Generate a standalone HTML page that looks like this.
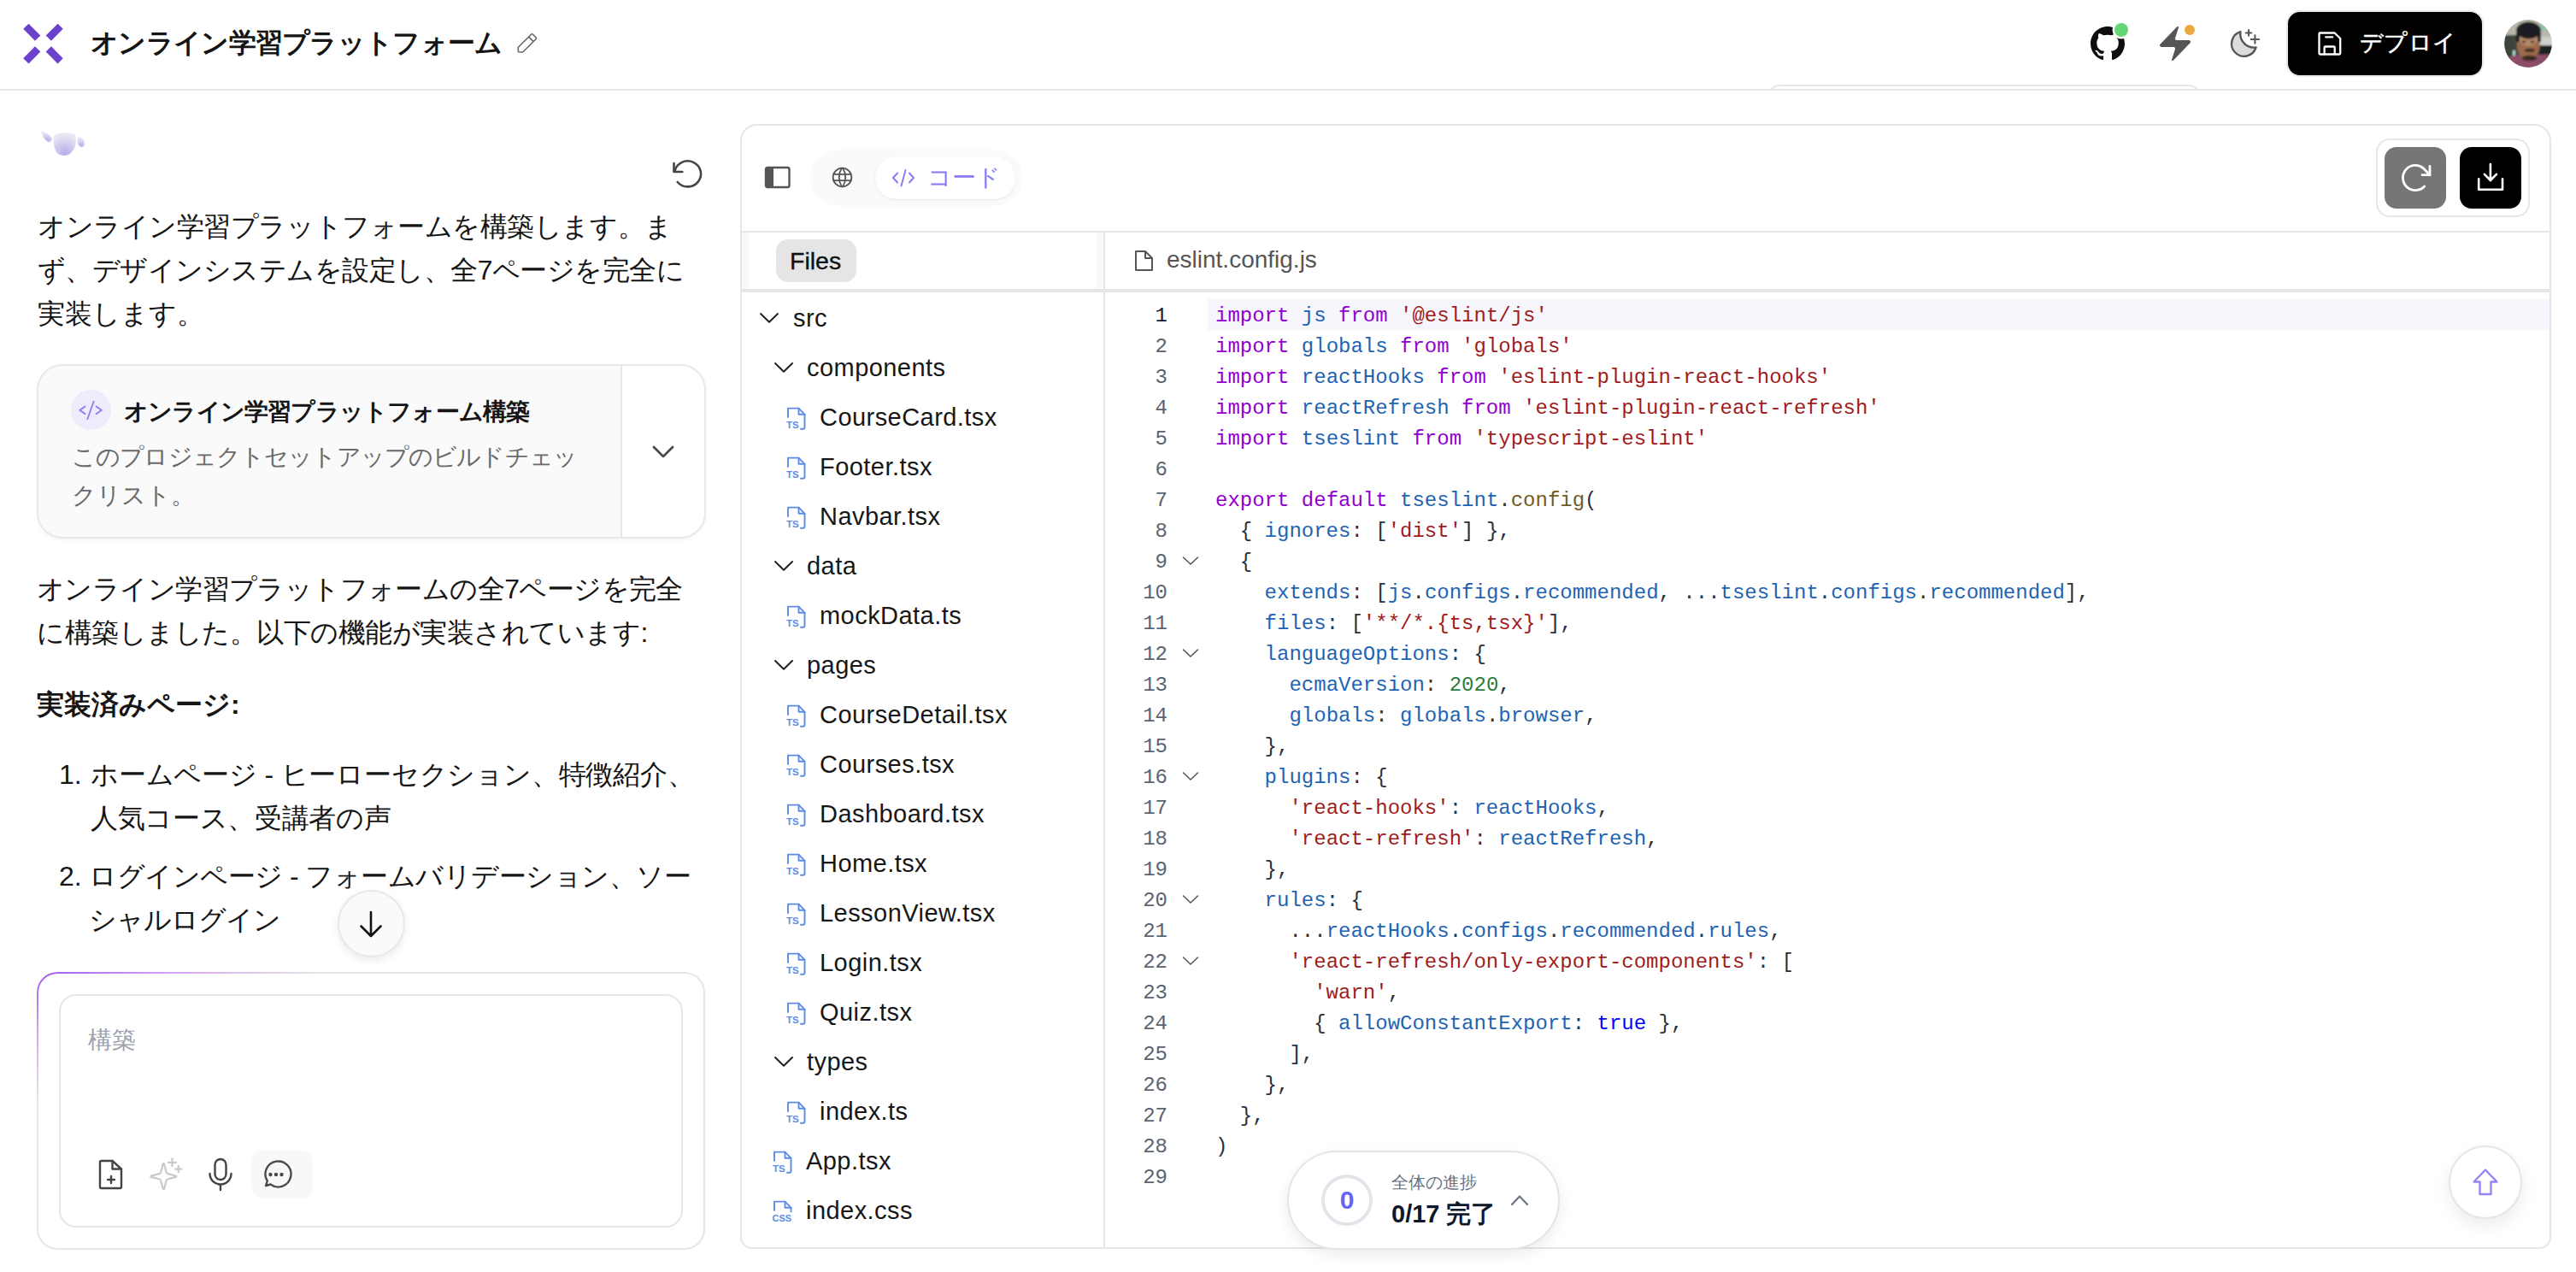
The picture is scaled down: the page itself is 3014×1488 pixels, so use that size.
<!DOCTYPE html>
<html><head><meta charset="utf-8">
<style>
*{box-sizing:border-box;margin:0;padding:0}
html,body{width:3014px;height:1488px;overflow:hidden;background:#fff;font-family:"Liberation Sans",sans-serif;color:#111}
.a{position:absolute}
svg{display:block}
/* header */
#hdr{left:0;top:0;width:3014px;height:106px;border-bottom:2px solid #e6e6e6;background:#fff}
#title{left:106px;top:26px;font-size:32px;font-weight:700;line-height:48px;color:#151515;white-space:nowrap;letter-spacing:-0.7px}
#deploy{left:2674.5px;top:12px;width:231px;height:78px;border-radius:16px;background:#000;border:2px solid #e9e9e9}
#deploytxt{left:2761px;top:30px;font-size:27px;line-height:40px;color:#fff;white-space:nowrap;letter-spacing:0.3px;-webkit-text-stroke:0.5px #fff}
#avatar{left:2930px;top:23px;width:56px;height:56px;border-radius:50%;overflow:hidden;background:#6f7468}
/* chat */
.jp{font-size:32px;line-height:51.2px;color:#151515;white-space:nowrap}
#card{left:43px;top:426px;width:782.5px;height:204px;border-radius:30px;background:#fafafa;border:2px solid #e8e8e8;box-shadow:0 2px 4px rgba(0,0,0,0.04)}
#outer{left:43px;top:1137px;width:782px;height:325px;border-radius:24px;border:2px solid #e6e6e6}
#inner{left:69px;top:1163px;width:730px;height:273px;border-radius:20px;border:2px solid #e6e6e6}
/* panel */
#panel{left:866px;top:145px;width:2119px;height:1316px;border-radius:20px 20px 14px 14px;border:2px solid #e6e6e6;background:#fff}
.row{position:absolute;font-size:29px;line-height:40px;color:#171717;white-space:nowrap;letter-spacing:0.45px}
.code{position:absolute;left:1422px;font-family:"Liberation Mono",monospace;font-size:24px;line-height:36px;white-space:pre;color:#2d3039}
.ln{position:absolute;left:1310px;width:56px;text-align:right;font-family:"Liberation Mono",monospace;font-size:24px;line-height:36px;color:#5c6370}
.k{color:#9000d0}.v{color:#2163b3}.s{color:#a01c1c}.f{color:#715b20}.n{color:#2a7d3e}.t{color:#0000ff}
</style></head><body>

<!-- tab behind header -->


<div id="hdr" class="a"></div>
<div class="a" style="left:2055px;top:97px;width:540px;height:7px;overflow:hidden"><div class="a" style="left:13px;top:1.5px;width:507px;height:40px;border:2px solid #e6e6e6;border-radius:14px;background:#fff"></div></div>
<svg class="a" style="left:0;top:0" width="90" height="90" viewBox="0 0 90 90">
<g fill="#6b42cc">
<polygon points="27.2,33.8 33.5,27.7 47.3,41.5 41,47.8"/>
<polygon points="53.7,41.5 67.5,27.7 73.7,33.8 59.9,47.8"/>
<polygon points="27.2,68.3 41,54.2 47.3,60.4 33.5,74.4"/>
<polygon points="53.7,60.4 59.9,54.2 73.7,68.3 67.5,74.4"/>
</g></svg>
<div id="title" class="a">オンライン学習プラットフォーム</div>
<svg class="a" style="left:600px;top:35px" width="32" height="32" viewBox="0 0 32 32" fill="none" stroke="#666" stroke-width="1.6" stroke-linejoin="round">
<path d="M6.5 25.8 L6.2 20.5 L21.5 5.2 a1.4 1.4 0 0 1 2 0 L27 8.7 a1.4 1.4 0 0 1 0 2 L11.7 26 Z"/><path d="M18.6 8.1 L24.1 13.6"/></svg>

<!-- header right icons -->
<svg class="a" style="left:2446px;top:31px" width="40" height="40" viewBox="0 0 16 16"><path fill="#0d0d0d" d="M8 0C3.58 0 0 3.58 0 8c0 3.54 2.29 6.53 5.47 7.59.4.07.55-.17.55-.38 0-.19-.01-.82-.01-1.49-2.010.37-2.53-.49-2.69-.94-.09-.23-.48-.94-.82-1.13-.28-.15-.68-.52-.01-.53.63-.01 1.08.58 1.23.82.72 1.21 1.87.87 2.33.66.07-.52.28-.87.51-1.07-1.78-.2-3.64-.89-3.64-3.95 0-.87.31-1.590.82-2.15-.08-.2-.36-1.02.08-2.12 0 0 .67-.21 2.2.82.64-.18 1.32-.27 2-.27.68 0 1.36.09 2 .27 1.53-1.04 2.2-.82 2.2-.82.44 1.1.16 1.92.08 2.12.51.56.82 1.27.82 2.15 0 3.07-1.87 3.75-3.65 3.95.29.25.54.73.54 1.48 0 1.07-.01 1.93-.01 2.2 0 .21.15.46.55.38A8.013 8.013 0 0016 8c0-4.42-3.58-8-8-8z"/></svg>
<div class="a" style="left:2474px;top:27px;width:16px;height:16px;border-radius:50%;background:#64d674;box-shadow:0 0 0 2.5px #fff"></div>
<svg class="a" style="left:2521px;top:27px" width="52" height="52" viewBox="0 0 26 26"><path fill="#555" d="M4 14a1 1 0 0 1-.78-1.63l9.9-10.2a.5.5 0 0 1 .86.46l-1.920 6.02A1 1 0 0 0 13 10h7a1 1 0 0 1 .78 1.63l-9.9 10.2a.5.5 0 0 1-.86-.46l1.92-6.02A1 1 0 0 0 11 14z"/></svg>
<div class="a" style="left:2556px;top:29px;width:12px;height:12px;border-radius:50%;background:#eba83d;box-shadow:0 0 0 2px #fff"></div>
<svg class="a" style="left:2600px;top:25px" width="50" height="48" viewBox="0 0 50 48" fill="none" stroke="#555" stroke-width="2.4" stroke-linecap="round" stroke-linejoin="round">
<path fill="#dcdcdc" d="M21.4 12.2 A16 16 0 0 0 39.6 30.4 A14.6 14.6 0 1 1 21.4 12.2 Z"/>
<path d="M31 10.1 V16.7 M27.7 13.4 H34.3 M38.4 16.3 V25.7 M33.7 21 H43.1" stroke-width="2"/></svg>

<div id="deploy" class="a"></div>
<svg class="a" style="left:2710px;top:35px" width="32" height="32" viewBox="0 0 32 32" fill="none" stroke="#fff" stroke-width="2.3" stroke-linejoin="round" stroke-linecap="round">
<path d="M4.5 3.5 H21.5 L28.2 10 V27.5 Q28.2 28.5 27.2 28.5 H4.5 Q3.5 28.5 3.5 27.5 V4.5 Q3.5 3.5 4.5 3.5 Z"/><path d="M9.6 28.5 V20.5 Q9.6 19.5 10.6 19.5 H20.7 Q21.7 19.5 21.7 20.5 V28.5"/><path d="M11.2 8.3 H19.2"/></svg>
<div id="deploytxt" class="a">デプロイ</div>
<svg class="a" style="left:2930px;top:23px" width="56" height="56" viewBox="0 0 56 56">
<defs><clipPath id="avc"><circle cx="28" cy="28" r="27.9"/></clipPath><filter id="avb"><feGaussianBlur stdDeviation="0.9"/></filter></defs>
<g clip-path="url(#avc)"><g filter="url(#avb)">
<rect x="-2" y="-2" width="60" height="60" fill="#b9b6aa"/>
<rect x="-2" y="18" width="22" height="30" fill="#3c443b"/>
<rect x="36" y="20" width="22" height="10" fill="#cfd0cb"/>
<rect x="38" y="30" width="20" height="16" fill="#1f2424"/>
<rect x="40" y="6" width="16" height="6" fill="#8fc4ae"/>
<rect x="10" y="36" width="3" height="10" fill="#a9d7d2"/>
<path d="M-2 46 C8 42 16 41 28 41 C40 41 48 41 58 40 V58 H-2 Z" fill="#8c4e68"/>
<ellipse cx="28.3" cy="29.5" rx="13.5" ry="18" fill="#9c6b4b"/>
<ellipse cx="28.3" cy="22" rx="11" ry="9" fill="#b88a6a"/>
<ellipse cx="28.5" cy="12.5" rx="14.3" ry="10" fill="#1d1b20"/>
<rect x="14" y="10" width="4" height="16" fill="#1d1b20"/><rect x="39" y="10" width="4" height="16" fill="#1d1b20"/>
<ellipse cx="30" cy="35.8" rx="6.5" ry="2" fill="#3a2a22"/>
<ellipse cx="29.5" cy="45" rx="9" ry="3.2" fill="#3b2a24"/>
<ellipse cx="23" cy="26" rx="2.5" ry="1.2" fill="#2a1d18"/><ellipse cx="33" cy="26" rx="2.5" ry="1.2" fill="#2a1d18"/>
</g></g></svg>

<!-- chat panel -->
<svg class="a" style="left:44px;top:150px" width="60" height="36" viewBox="0 0 60 36">
<defs><radialGradient id="bg1" cx="0.5" cy="0.9" r="0.8"><stop offset="0" stop-color="#b6aee8"/><stop offset="1" stop-color="#e8e6f3"/></radialGradient>
<filter id="bl"><feGaussianBlur stdDeviation="0.5"/></filter></defs>
<g filter="url(#bl)">
<path d="M4 4 C8 3 14 8 17 12 C16 16 14 17 12 16 C8 13 5 9 4 4Z" fill="url(#bg1)"/>
<path d="M19 10 C20 5 40 4 44 8 C46 14 45 24 38 30 C33 33 26 33 22 28 C19 23 18 15 19 10Z" fill="url(#bg1)"/>
<path d="M47 11 C50 9 55 13 55 18 C55 22 52 24 48 20 C46 17 46 13 47 11Z" fill="url(#bg1)"/>
</g></svg>
<svg class="a" style="left:780px;top:180px" width="48" height="48" viewBox="0 0 48 48" fill="none" stroke="#444" stroke-width="2.6" stroke-linecap="round" stroke-linejoin="round">
<path d="M9.5 20 A15.5 15 0 1 1 12.7 33"/><path d="M8.5 11 V21 H18.3"/></svg>

<div class="a jp" style="left:44px;top:240px;letter-spacing:-0.45px">オンライン学習プラットフォームを構築します。ま</div>
<div class="a jp" style="left:44px;top:291.2px;letter-spacing:-0.52px">ず、デザインシステムを設定し、全7ページを完全に</div>
<div class="a jp" style="left:44px;top:342.4px">実装します。</div>

<div id="card" class="a"></div>
<div class="a" style="left:728px;top:428px;width:95.5px;height:200px;background:#fff;border-radius:0 28px 28px 0"></div>
<div class="a" style="left:726px;top:428px;width:2px;height:200px;background:#e6e6e6"></div>
<div class="a" style="left:83px;top:456px;width:47px;height:47px;border-radius:50%;background:#efebfc"></div>
<svg class="a" style="left:90px;top:466px" width="32" height="28" viewBox="0 0 32 28" fill="none" stroke="#8b7cf0" stroke-width="1.8" stroke-linecap="round" stroke-linejoin="round">
<path d="M9.6 9.5 L3.4 13.8 L9.6 18.3 M22.5 9.5 L28.8 13.8 L22.5 18.3 M19.7 3.5 L12.3 24.2"/></svg>
<div class="a" style="left:145px;top:461.5px;font-size:28px;line-height:40px;font-weight:700;color:#151515;white-space:nowrap;letter-spacing:-0.8px">オンライン学習プラットフォーム構築</div>
<div class="a" style="left:84px;top:512px;font-size:28px;line-height:45px;color:#6a6a6a;white-space:nowrap;letter-spacing:-0.86px">このプロジェクトセットアップのビルドチェッ</div>
<div class="a" style="left:84px;top:557px;font-size:28px;line-height:45px;color:#6a6a6a;white-space:nowrap">クリスト。</div>
<svg class="a" style="left:760px;top:515px" width="32" height="30" viewBox="0 0 32 30" fill="none" stroke="#4a4a4a" stroke-width="2.8" stroke-linecap="round" stroke-linejoin="round">
<path d="M5 8 L16 19 L27 8"/></svg>

<div class="a jp" style="left:43px;top:664px;letter-spacing:-0.58px">オンライン学習プラットフォームの全7ページを完全</div>
<div class="a jp" style="left:43px;top:715.2px;letter-spacing:-0.48px">に構築しました。以下の機能が実装されています:</div>
<div class="a jp" style="left:43px;top:799px;font-weight:700">実装済みページ:</div>
<div class="a jp" style="left:69px;top:881px">1.</div>
<div class="a jp" style="left:106px;top:881px;letter-spacing:-0.2px">ホームページ - ヒーローセクション、特徴紹介、</div>
<div class="a jp" style="left:106px;top:932.2px;letter-spacing:-0.35px">人気コース、受講者の声</div>
<div class="a jp" style="left:69px;top:999.5px">2.</div>
<div class="a jp" style="left:104px;top:999.5px;letter-spacing:-0.5px">ログインページ - フォームバリデーション、ソー</div>
<div class="a jp" style="left:104px;top:1050.7px;letter-spacing:-1px">シャルログイン</div>

<div class="a" style="left:394.5px;top:1041px;width:79px;height:78.5px;border-radius:50%;background:#fafafa;border:2px solid #e8e8e8;box-shadow:0 4px 10px rgba(0,0,0,0.08)"></div>
<svg class="a" style="left:414px;top:1061px" width="40" height="40" viewBox="0 0 40 40" fill="none" stroke="#111" stroke-width="2.6" stroke-linecap="round" stroke-linejoin="round">
<path d="M20 6 V34 M8.5 22.5 L20 34 L31.5 22.5"/></svg>

<div id="outer" class="a"></div>
<div class="a" style="left:43px;top:1137px;width:782px;height:325px;border-radius:24px;border:2px solid transparent;background:radial-gradient(ellipse 330px 150px at 0 0,#a259f0 0%,#d99cf5 45%,rgba(230,190,250,0) 100%) border-box;-webkit-mask:linear-gradient(#000 0 0) padding-box,linear-gradient(#000 0 0);-webkit-mask-composite:xor;mask-composite:exclude"></div>
<div id="inner" class="a"></div>
<div class="a" style="left:103px;top:1197px;font-size:28px;line-height:40px;color:#9ca3af">構築</div>

<!-- main panel -->
<div id="panel" class="a"></div>
<!-- toolbar -->
<svg class="a" style="left:892px;top:192px" width="36" height="32" viewBox="0 0 36 32">
<rect x="4" y="4" width="27.5" height="23" rx="2" fill="none" stroke="#555" stroke-width="2.4"/>
<rect x="4" y="4" width="9" height="23" rx="1.5" fill="#555"/></svg>
<div class="a" style="left:948px;top:175px;width:248px;height:66px;border-radius:33px;background:#fafafa"></div>
<svg class="a" style="left:971.3px;top:193.4px" width="29" height="29" viewBox="0 0 24 24" fill="none" stroke="#555" stroke-width="1.5" stroke-linecap="round" stroke-linejoin="round">
<path d="M3 12a9 9 0 1 0 18 0a9 9 0 0 0 -18 0"/><path d="M3.6 9h16.8M3.6 15h16.8"/><path d="M11.5 3a17 17 0 0 0 0 18"/><path d="M12.5 3a17 17 0 0 1 0 18"/></svg>
<div class="a" style="left:1024px;top:183px;width:164px;height:50px;border-radius:25px;background:#fff;box-shadow:0 1px 3px rgba(0,0,0,0.08)"></div>
<svg class="a" style="left:1040px;top:194px" width="34" height="28" viewBox="0 0 34 28" fill="none" stroke="#8b7cf6" stroke-width="2" stroke-linecap="round" stroke-linejoin="round">
<path d="M10 8.5 L5 14 L10 19.5 M24 8.5 L29 14 L24 19.5 M19.5 5 L14.5 23.5"/></svg>
<div class="a" style="left:1085px;top:188px;font-size:28px;line-height:40px;color:#8b7cf6;letter-spacing:0px;white-space:nowrap">コード</div>

<div class="a" style="left:2780px;top:162px;width:180px;height:92px;border-radius:16px;border:2px solid #e6e6e6"></div>
<div class="a" style="left:2790px;top:172px;width:72px;height:72px;border-radius:14px;background:#767676"></div>
<svg class="a" style="left:2800px;top:180px" width="56" height="56" viewBox="0 0 56 56" fill="none" stroke="#fff" stroke-width="2.8" stroke-linecap="round" stroke-linejoin="round">
<path d="M36.7 38 A14.6 14.6 0 1 1 35.4 16.8 L43 24.7"/><path d="M43 14.5 V24.7 H34"/></svg>
<div class="a" style="left:2878px;top:172px;width:72px;height:72px;border-radius:14px;background:#000"></div>
<svg class="a" style="left:2894px;top:188px" width="40" height="40" viewBox="0 0 40 40" fill="none" stroke="#fff" stroke-width="2.6" stroke-linecap="round" stroke-linejoin="round">
<path d="M19.9 4 V23.3 M12.9 15.8 L19.9 23 L26.9 15.8 M6.2 21.4 V33.7 H34 V21.4"/></svg>

<div class="a" style="left:868px;top:270px;width:2115px;height:2px;background:#e6e6e6"></div>
<div class="a" style="left:868px;top:338px;width:2115px;height:4px;background:#e6e6e6"></div>
<div class="a" style="left:1291px;top:271px;width:2px;height:1188px;background:#e6e6e6"></div>
<div class="a" style="left:868px;top:272px;width:8px;height:66px;background:#f9f9f9"></div>
<div class="a" style="left:1283px;top:272px;width:8px;height:66px;background:#f9f9f9"></div>
<div class="a" style="left:908px;top:280px;width:94px;height:50px;border-radius:14px;background:#e5e5e5"></div>
<div class="a" style="left:924px;top:285px;font-size:28.5px;line-height:40px;color:#111;white-space:nowrap;-webkit-text-stroke:0.35px #111">Files</div>
<svg class="a" style="left:1324px;top:290px" width="30" height="30" viewBox="0 0 30 30" fill="none" stroke="#555" stroke-width="2" stroke-linejoin="round">
<path d="M5 4 H16 L24 12 V26 H5 Z"/><path d="M16 4 V12 H24"/></svg>
<div class="a" style="left:1365px;top:284px;font-size:28px;line-height:40px;color:#555;white-space:nowrap">eslint.config.js</div>

<div class="a" style="left:1413px;top:350px;width:1570px;height:36px;background:#f7f6fd"></div>
<svg class="a" style="left:888.0px;top:358.5px" width="24" height="24" viewBox="0 0 24 24" fill="none" stroke="#222" stroke-width="2" stroke-linecap="round" stroke-linejoin="round"><path d="M2 8 L12 17.8 L22 8"/></svg>
<div class="row" style="left:928px;top:351.5px">src</div>
<svg class="a" style="left:904.5px;top:416.5px" width="24" height="24" viewBox="0 0 24 24" fill="none" stroke="#222" stroke-width="2" stroke-linecap="round" stroke-linejoin="round"><path d="M2 8 L12 17.8 L22 8"/></svg>
<div class="row" style="left:944px;top:409.5px">components</div>
<svg class="a" style="left:915px;top:475.6px" width="32" height="30" viewBox="0 0 32 30" fill="none" stroke="#5b8de8" stroke-width="1.9" stroke-linejoin="round" stroke-linecap="round"><path d="M7 12 V1.6 H19.5 L26.5 8.8 V23.8 Q26.5 25.8 24.5 25.8 H22"/><path d="M19.5 1.6 V8.8 H26.5"/><text x="5" y="24.6" font-family="Liberation Sans" font-size="11.5" font-weight="700" fill="#5b8de8" stroke="none">TS</text></svg>
<div class="row" style="left:959px;top:467.6px">CourseCard.tsx</div>
<svg class="a" style="left:915px;top:533.6px" width="32" height="30" viewBox="0 0 32 30" fill="none" stroke="#5b8de8" stroke-width="1.9" stroke-linejoin="round" stroke-linecap="round"><path d="M7 12 V1.6 H19.5 L26.5 8.8 V23.8 Q26.5 25.8 24.5 25.8 H22"/><path d="M19.5 1.6 V8.8 H26.5"/><text x="5" y="24.6" font-family="Liberation Sans" font-size="11.5" font-weight="700" fill="#5b8de8" stroke="none">TS</text></svg>
<div class="row" style="left:959px;top:525.6px">Footer.tsx</div>
<svg class="a" style="left:915px;top:591.6px" width="32" height="30" viewBox="0 0 32 30" fill="none" stroke="#5b8de8" stroke-width="1.9" stroke-linejoin="round" stroke-linecap="round"><path d="M7 12 V1.6 H19.5 L26.5 8.8 V23.8 Q26.5 25.8 24.5 25.8 H22"/><path d="M19.5 1.6 V8.8 H26.5"/><text x="5" y="24.6" font-family="Liberation Sans" font-size="11.5" font-weight="700" fill="#5b8de8" stroke="none">TS</text></svg>
<div class="row" style="left:959px;top:583.6px">Navbar.tsx</div>
<svg class="a" style="left:904.5px;top:648.6px" width="24" height="24" viewBox="0 0 24 24" fill="none" stroke="#222" stroke-width="2" stroke-linecap="round" stroke-linejoin="round"><path d="M2 8 L12 17.8 L22 8"/></svg>
<div class="row" style="left:944px;top:641.6px">data</div>
<svg class="a" style="left:915px;top:707.7px" width="32" height="30" viewBox="0 0 32 30" fill="none" stroke="#5b8de8" stroke-width="1.9" stroke-linejoin="round" stroke-linecap="round"><path d="M7 12 V1.6 H19.5 L26.5 8.8 V23.8 Q26.5 25.8 24.5 25.8 H22"/><path d="M19.5 1.6 V8.8 H26.5"/><text x="5" y="24.6" font-family="Liberation Sans" font-size="11.5" font-weight="700" fill="#5b8de8" stroke="none">TS</text></svg>
<div class="row" style="left:959px;top:699.7px">mockData.ts</div>
<svg class="a" style="left:904.5px;top:764.7px" width="24" height="24" viewBox="0 0 24 24" fill="none" stroke="#222" stroke-width="2" stroke-linecap="round" stroke-linejoin="round"><path d="M2 8 L12 17.8 L22 8"/></svg>
<div class="row" style="left:944px;top:757.7px">pages</div>
<svg class="a" style="left:915px;top:823.7px" width="32" height="30" viewBox="0 0 32 30" fill="none" stroke="#5b8de8" stroke-width="1.9" stroke-linejoin="round" stroke-linecap="round"><path d="M7 12 V1.6 H19.5 L26.5 8.8 V23.8 Q26.5 25.8 24.5 25.8 H22"/><path d="M19.5 1.6 V8.8 H26.5"/><text x="5" y="24.6" font-family="Liberation Sans" font-size="11.5" font-weight="700" fill="#5b8de8" stroke="none">TS</text></svg>
<div class="row" style="left:959px;top:815.7px">CourseDetail.tsx</div>
<svg class="a" style="left:915px;top:881.8px" width="32" height="30" viewBox="0 0 32 30" fill="none" stroke="#5b8de8" stroke-width="1.9" stroke-linejoin="round" stroke-linecap="round"><path d="M7 12 V1.6 H19.5 L26.5 8.8 V23.8 Q26.5 25.8 24.5 25.8 H22"/><path d="M19.5 1.6 V8.8 H26.5"/><text x="5" y="24.6" font-family="Liberation Sans" font-size="11.5" font-weight="700" fill="#5b8de8" stroke="none">TS</text></svg>
<div class="row" style="left:959px;top:873.8px">Courses.tsx</div>
<svg class="a" style="left:915px;top:939.8px" width="32" height="30" viewBox="0 0 32 30" fill="none" stroke="#5b8de8" stroke-width="1.9" stroke-linejoin="round" stroke-linecap="round"><path d="M7 12 V1.6 H19.5 L26.5 8.8 V23.8 Q26.5 25.8 24.5 25.8 H22"/><path d="M19.5 1.6 V8.8 H26.5"/><text x="5" y="24.6" font-family="Liberation Sans" font-size="11.5" font-weight="700" fill="#5b8de8" stroke="none">TS</text></svg>
<div class="row" style="left:959px;top:931.8px">Dashboard.tsx</div>
<svg class="a" style="left:915px;top:997.8px" width="32" height="30" viewBox="0 0 32 30" fill="none" stroke="#5b8de8" stroke-width="1.9" stroke-linejoin="round" stroke-linecap="round"><path d="M7 12 V1.6 H19.5 L26.5 8.8 V23.8 Q26.5 25.8 24.5 25.8 H22"/><path d="M19.5 1.6 V8.8 H26.5"/><text x="5" y="24.6" font-family="Liberation Sans" font-size="11.5" font-weight="700" fill="#5b8de8" stroke="none">TS</text></svg>
<div class="row" style="left:959px;top:989.8px">Home.tsx</div>
<svg class="a" style="left:915px;top:1055.9px" width="32" height="30" viewBox="0 0 32 30" fill="none" stroke="#5b8de8" stroke-width="1.9" stroke-linejoin="round" stroke-linecap="round"><path d="M7 12 V1.6 H19.5 L26.5 8.8 V23.8 Q26.5 25.8 24.5 25.8 H22"/><path d="M19.5 1.6 V8.8 H26.5"/><text x="5" y="24.6" font-family="Liberation Sans" font-size="11.5" font-weight="700" fill="#5b8de8" stroke="none">TS</text></svg>
<div class="row" style="left:959px;top:1047.9px">LessonView.tsx</div>
<svg class="a" style="left:915px;top:1113.9px" width="32" height="30" viewBox="0 0 32 30" fill="none" stroke="#5b8de8" stroke-width="1.9" stroke-linejoin="round" stroke-linecap="round"><path d="M7 12 V1.6 H19.5 L26.5 8.8 V23.8 Q26.5 25.8 24.5 25.8 H22"/><path d="M19.5 1.6 V8.8 H26.5"/><text x="5" y="24.6" font-family="Liberation Sans" font-size="11.5" font-weight="700" fill="#5b8de8" stroke="none">TS</text></svg>
<div class="row" style="left:959px;top:1105.9px">Login.tsx</div>
<svg class="a" style="left:915px;top:1171.9px" width="32" height="30" viewBox="0 0 32 30" fill="none" stroke="#5b8de8" stroke-width="1.9" stroke-linejoin="round" stroke-linecap="round"><path d="M7 12 V1.6 H19.5 L26.5 8.8 V23.8 Q26.5 25.8 24.5 25.8 H22"/><path d="M19.5 1.6 V8.8 H26.5"/><text x="5" y="24.6" font-family="Liberation Sans" font-size="11.5" font-weight="700" fill="#5b8de8" stroke="none">TS</text></svg>
<div class="row" style="left:959px;top:1163.9px">Quiz.tsx</div>
<svg class="a" style="left:904.5px;top:1229.0px" width="24" height="24" viewBox="0 0 24 24" fill="none" stroke="#222" stroke-width="2" stroke-linecap="round" stroke-linejoin="round"><path d="M2 8 L12 17.8 L22 8"/></svg>
<div class="row" style="left:944px;top:1222.0px">types</div>
<svg class="a" style="left:915px;top:1288.0px" width="32" height="30" viewBox="0 0 32 30" fill="none" stroke="#5b8de8" stroke-width="1.9" stroke-linejoin="round" stroke-linecap="round"><path d="M7 12 V1.6 H19.5 L26.5 8.8 V23.8 Q26.5 25.8 24.5 25.8 H22"/><path d="M19.5 1.6 V8.8 H26.5"/><text x="5" y="24.6" font-family="Liberation Sans" font-size="11.5" font-weight="700" fill="#5b8de8" stroke="none">TS</text></svg>
<div class="row" style="left:959px;top:1280.0px">index.ts</div>
<svg class="a" style="left:899px;top:1346.0px" width="32" height="30" viewBox="0 0 32 30" fill="none" stroke="#5b8de8" stroke-width="1.9" stroke-linejoin="round" stroke-linecap="round"><path d="M7 12 V1.6 H19.5 L26.5 8.8 V23.8 Q26.5 25.8 24.5 25.8 H22"/><path d="M19.5 1.6 V8.8 H26.5"/><text x="5" y="24.6" font-family="Liberation Sans" font-size="11.5" font-weight="700" fill="#5b8de8" stroke="none">TS</text></svg>
<div class="row" style="left:943px;top:1338.0px">App.tsx</div>
<svg class="a" style="left:899px;top:1404.0px" width="32" height="30" viewBox="0 0 32 30" fill="none" stroke="#5b8de8" stroke-width="1.9" stroke-linejoin="round" stroke-linecap="round"><path d="M7 12 V1.6 H19.5 L26.5 8.8 V13.5"/><path d="M19.5 1.6 V8.8 H26.5"/><text x="4.6" y="25" font-family="Liberation Sans" font-size="11" font-weight="700" fill="#5b8de8" stroke="none">CSS</text></svg>
<div class="row" style="left:943px;top:1396.0px">index.css</div>
<div class="code" style="top:352px"><span class="k">import</span> <span class="v">js</span> <span class="k">from</span> <span class="s">'@eslint/js'</span></div>
<div class="ln" style="top:352px;color:#161b2e">1</div>
<div class="code" style="top:388px"><span class="k">import</span> <span class="v">globals</span> <span class="k">from</span> <span class="s">'globals'</span></div>
<div class="ln" style="top:388px">2</div>
<div class="code" style="top:424px"><span class="k">import</span> <span class="v">reactHooks</span> <span class="k">from</span> <span class="s">'eslint-plugin-react-hooks'</span></div>
<div class="ln" style="top:424px">3</div>
<div class="code" style="top:460px"><span class="k">import</span> <span class="v">reactRefresh</span> <span class="k">from</span> <span class="s">'eslint-plugin-react-refresh'</span></div>
<div class="ln" style="top:460px">4</div>
<div class="code" style="top:496px"><span class="k">import</span> <span class="v">tseslint</span> <span class="k">from</span> <span class="s">'typescript-eslint'</span></div>
<div class="ln" style="top:496px">5</div>
<div class="code" style="top:532px"></div>
<div class="ln" style="top:532px">6</div>
<div class="code" style="top:568px"><span class="k">export</span> <span class="k">default</span> <span class="v">tseslint</span>.<span class="f">config</span>(</div>
<div class="ln" style="top:568px">7</div>
<div class="code" style="top:604px">  { <span class="v">ignores</span>: [<span class="s">'dist'</span>] },</div>
<div class="ln" style="top:604px">8</div>
<div class="code" style="top:640px">  {</div>
<div class="ln" style="top:640px">9</div>
<div class="code" style="top:676px">    <span class="v">extends</span>: [<span class="v">js</span>.<span class="v">configs</span>.<span class="v">recommended</span>, ...<span class="v">tseslint</span>.<span class="v">configs</span>.<span class="v">recommended</span>],</div>
<div class="ln" style="top:676px">10</div>
<div class="code" style="top:712px">    <span class="v">files</span>: [<span class="s">'**/*.{ts,tsx}'</span>],</div>
<div class="ln" style="top:712px">11</div>
<div class="code" style="top:748px">    <span class="v">languageOptions</span>: {</div>
<div class="ln" style="top:748px">12</div>
<div class="code" style="top:784px">      <span class="v">ecmaVersion</span>: <span class="n">2020</span>,</div>
<div class="ln" style="top:784px">13</div>
<div class="code" style="top:820px">      <span class="v">globals</span>: <span class="v">globals</span>.<span class="v">browser</span>,</div>
<div class="ln" style="top:820px">14</div>
<div class="code" style="top:856px">    },</div>
<div class="ln" style="top:856px">15</div>
<div class="code" style="top:892px">    <span class="v">plugins</span>: {</div>
<div class="ln" style="top:892px">16</div>
<div class="code" style="top:928px">      <span class="s">'react-hooks'</span>: <span class="v">reactHooks</span>,</div>
<div class="ln" style="top:928px">17</div>
<div class="code" style="top:964px">      <span class="s">'react-refresh'</span>: <span class="v">reactRefresh</span>,</div>
<div class="ln" style="top:964px">18</div>
<div class="code" style="top:1000px">    },</div>
<div class="ln" style="top:1000px">19</div>
<div class="code" style="top:1036px">    <span class="v">rules</span>: {</div>
<div class="ln" style="top:1036px">20</div>
<div class="code" style="top:1072px">      ...<span class="v">reactHooks</span>.<span class="v">configs</span>.<span class="v">recommended</span>.<span class="v">rules</span>,</div>
<div class="ln" style="top:1072px">21</div>
<div class="code" style="top:1108px">      <span class="s">'react-refresh/only-export-components'</span>: [</div>
<div class="ln" style="top:1108px">22</div>
<div class="code" style="top:1144px">        <span class="s">'warn'</span>,</div>
<div class="ln" style="top:1144px">23</div>
<div class="code" style="top:1180px">        { <span class="v">allowConstantExport</span>: <span class="t">true</span> },</div>
<div class="ln" style="top:1180px">24</div>
<div class="code" style="top:1216px">      ],</div>
<div class="ln" style="top:1216px">25</div>
<div class="code" style="top:1252px">    },</div>
<div class="ln" style="top:1252px">26</div>
<div class="code" style="top:1288px">  },</div>
<div class="ln" style="top:1288px">27</div>
<div class="code" style="top:1324px">)</div>
<div class="ln" style="top:1324px">28</div>
<div class="code" style="top:1360px"></div>
<div class="ln" style="top:1360px">29</div>
<svg class="a" style="left:1380px;top:646px" width="26" height="20" viewBox="0 0 26 20" fill="none" stroke="#555" stroke-width="1.6" stroke-linecap="round" stroke-linejoin="round"><path d="M4.5 6 L13 14 L21.5 6"/></svg>
<svg class="a" style="left:1380px;top:754px" width="26" height="20" viewBox="0 0 26 20" fill="none" stroke="#555" stroke-width="1.6" stroke-linecap="round" stroke-linejoin="round"><path d="M4.5 6 L13 14 L21.5 6"/></svg>
<svg class="a" style="left:1380px;top:898px" width="26" height="20" viewBox="0 0 26 20" fill="none" stroke="#555" stroke-width="1.6" stroke-linecap="round" stroke-linejoin="round"><path d="M4.5 6 L13 14 L21.5 6"/></svg>
<svg class="a" style="left:1380px;top:1042px" width="26" height="20" viewBox="0 0 26 20" fill="none" stroke="#555" stroke-width="1.6" stroke-linecap="round" stroke-linejoin="round"><path d="M4.5 6 L13 14 L21.5 6"/></svg>
<svg class="a" style="left:1380px;top:1114px" width="26" height="20" viewBox="0 0 26 20" fill="none" stroke="#555" stroke-width="1.6" stroke-linecap="round" stroke-linejoin="round"><path d="M4.5 6 L13 14 L21.5 6"/></svg>
<!-- progress pill -->
<div class="a" style="left:1506px;top:1346px;width:319px;height:116px;border-radius:58px;background:#fff;border:2px solid #e4e5ea;box-shadow:0 6px 16px rgba(0,0,0,0.08)"></div>
<div class="a" style="left:1546px;top:1374px;width:60px;height:60px;border-radius:50%;border:4px solid #e4e5ea"></div>
<div class="a" style="left:1546px;top:1384px;width:60px;text-align:center;font-size:30px;line-height:40px;font-weight:700;color:#6366f1">0</div>
<div class="a" style="left:1628px;top:1368px;font-size:20px;line-height:30px;color:#6b7280;white-space:nowrap">全体の進捗</div>
<div class="a" style="left:1628px;top:1400px;font-size:29px;line-height:40px;font-weight:700;color:#0f172a;white-space:nowrap">0/17 完了</div>
<svg class="a" style="left:1764px;top:1390px" width="28" height="26" viewBox="0 0 28 26" fill="none" stroke="#6b7280" stroke-width="2.2" stroke-linecap="round" stroke-linejoin="round"><path d="M5 19 L14 9.5 L23 19"/></svg>
<!-- scroll top -->
<div class="a" style="left:2865px;top:1340px;width:86px;height:86px;border-radius:50%;background:#fff;border:2px solid #e6e6e6;box-shadow:0 8px 20px rgba(0,0,0,0.08)"></div>
<svg class="a" style="left:2888px;top:1362px" width="40" height="40" viewBox="0 0 40 40" fill="none" stroke="#9484f7" stroke-width="2.4" stroke-linejoin="round">
<path d="M20 6.5 L6.5 20.5 H13.5 V35 H26.5 V20.5 H33.5 Z"/></svg>
<!-- input icons -->
<svg class="a" style="left:112px;top:1354px" width="36" height="40" viewBox="0 0 36 40" fill="none" stroke="#444" stroke-width="2.4" stroke-linejoin="round" stroke-linecap="round">
<path d="M6.5 4 H19.5 L30 13.5 V34.5 Q30 36 28.5 36 H6.5 Q5 36 5 34.5 V5.5 Q5 4 6.5 4 Z"/><path d="M19.5 4 V13.5 H30"/><path d="M18 22 V30 M14 26 H22"/></svg>
<svg class="a" style="left:171px;top:1350px" width="48" height="48" viewBox="0 0 48 48" fill="none" stroke="#c9c9c9" stroke-width="2.2" stroke-linejoin="round" stroke-linecap="round">
<g transform="translate(2.4 8.2) scale(1.5)" stroke-width="1.45"><path d="M9.937 15.5A2 2 0 0 0 8.5 14.063l-6.135-1.582a.5.5 0 0 1 0-.962L8.5 9.936A2 2 0 0 0 9.937 8.5l1.582-6.135a.5.5 0 0 1 .963 0L14.063 8.5A2 2 0 0 0 15.5 9.937l6.135 1.581a.5.5 0 0 1 0 .964L15.5 14.063a2 2 0 0 0-1.437 1.437l-1.582 6.135a.5.5 0 0 1-.963 0z"/></g>
<path d="M30.5 5.3 V14.3 M26 9.8 H35 M37.8 14.2 V21.2 M34.3 17.7 H41.3"/></svg>
<svg class="a" style="left:238px;top:1352px" width="40" height="44" viewBox="0 0 40 44" fill="none" stroke="#444" stroke-width="2.4" stroke-linecap="round">
<rect x="13.5" y="4" width="13" height="24" rx="6.5"/><path d="M7.5 21 A12.5 12.5 0 0 0 32.5 21 M20 33.5 V40"/></svg>
<div class="a" style="left:294px;top:1346px;width:72px;height:56px;border-radius:14px;background:#f8f8f8"></div>
<svg class="a" style="left:303px;top:1354px" width="40" height="40" viewBox="0 0 40 40" fill="none" stroke="#4a4a4a" stroke-width="2.4" stroke-linejoin="round" stroke-linecap="round">
<path d="M8 33 L9.8 27.5 A15 15 0 1 1 13.5 31.5 Z"/><circle cx="13.5" cy="20" r="1" fill="#4a4a4a"/><circle cx="20" cy="20" r="1" fill="#4a4a4a"/><circle cx="26.5" cy="20" r="1" fill="#4a4a4a"/></svg>


</body></html>
